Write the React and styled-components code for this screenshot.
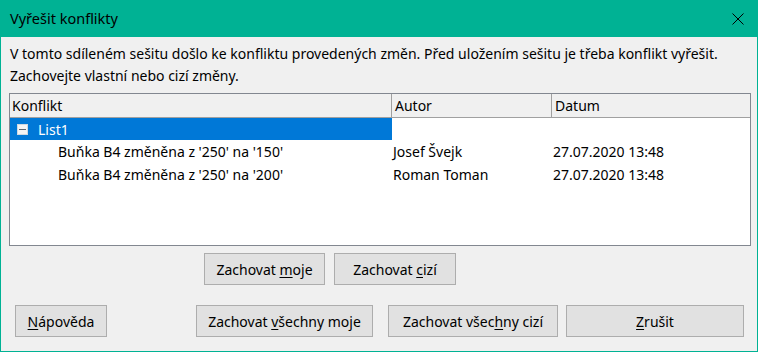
import React from 'react';
import styled, { createGlobalStyle } from 'styled-components';

const GlobalStyle = createGlobalStyle`
  html, body {
    margin: 0;
    padding: 0;
    background: #f0f0f0;
  }
  * {
    box-sizing: border-box;
  }
`;

const Window = styled.div`
  width: 758px;
  height: 352px;
  display: flex;
  flex-direction: column;
  background: #f0f0f0;
  border: 1px solid #00b294;
  border-top: none;
  font-family: 'Noto Sans', 'Open Sans', sans-serif;
  font-size: 14px;
  color: #000;
`;

const TitleBar = styled.div`
  height: 37px;
  margin: 0 -1px;
  background: #00b294;
  display: flex;
  align-items: center;
  justify-content: space-between;
  padding: 0 14px 2px 10px;
`;

const Title = styled.span`
  font-size: 14.5px;
  color: #000;
`;

const CloseButton = styled.span`
  display: flex;
  width: 12px;
  height: 12px;
  margin-top: 2px;
`;

const Body = styled.div`
  flex: 1;
  display: flex;
  flex-direction: column;
  padding: 6px 6px 0 8px;
`;

const Message = styled.div`
  padding-left: 1px;
  line-height: 22px;
  white-space: nowrap;
  margin-bottom: 6px;
`;

const Table = styled.div`
  height: 153px;
  border: 1px solid #828790;
  background: #fff;
  display: flex;
  flex-direction: column;
`;

const HeaderRow = styled.div`
  display: grid;
  grid-template-columns: 382px 160px 1fr;
  height: 24px;
  background: #f0f0f0;
  border-bottom: 1px solid #a0a0a0;
`;

const HeaderCell = styled.div`
  display: flex;
  align-items: center;
  padding-left: ${p => p.$pad ?? 2}px;
  border-right: ${p => (p.$last ? 'none' : '1px solid #a0a0a0')};
`;

const Row = styled.div`
  display: grid;
  grid-template-columns: 382px 160px 1fr;
  height: ${p => p.$h ?? 23}px;
`;

const Cell = styled.div`
  display: flex;
  align-items: center;
  padding-left: ${p => p.$indent ?? 1}px;
  background: ${p => (p.$selected ? '#0078d7' : 'transparent')};
  color: ${p => (p.$selected ? '#fff' : '#000')};
  white-space: nowrap;
`;

const Expander = styled.span`
  display: flex;
  margin-right: 10px;
`;

const ButtonRow = styled.div`
  display: flex;
  gap: ${p => p.$gap ?? 9}px;
  padding-left: ${p => p.$left ?? 0}px;
  margin-top: ${p => p.$top ?? 0}px;
`;

const Button = styled.button`
  flex: none;
  width: ${p => p.$w}px;
  height: 32px;
  margin: 0 0 0 ${p => p.$ml ?? 0}px;
  background: #e1e1e1;
  border: 1px solid #adadad;
  border-radius: 0;
  font-family: 'Noto Sans', 'Open Sans', sans-serif;
  font-size: 14px;
  color: #000;
  padding: 0;
  display: flex;
  align-items: center;
  justify-content: center;

  u {
    text-underline-offset: 2px;
  }
`;

const MinusBox = () => (
  <svg width="11" height="11" viewBox="0 0 11 11">
    <rect x="0.5" y="0.5" width="10" height="10" fill="#f4f4f4" stroke="#cfd8e0" />
    <line x1="2" y1="5.5" x2="9" y2="5.5" stroke="#5a6470" strokeWidth="1" />
  </svg>
);

const CloseIcon = () => (
  <svg width="12" height="12" viewBox="0 0 12 12">
    <path d="M0.5 0.5 L11.5 11.5 M11.5 0.5 L0.5 11.5" stroke="#000" strokeWidth="1" />
  </svg>
);

const changes = [
  { text: "Buňka B4 změněna z '250' na '150'", author: 'Josef Švejk', date: '27.07.2020 13:48' },
  { text: "Buňka B4 změněna z '250' na '200'", author: 'Roman Toman', date: '27.07.2020 13:48' },
];

export default function App() {
  return (
    <>
      <GlobalStyle />
      <Window>
        <TitleBar>
          <Title>Vyřešit konflikty</Title>
          <CloseButton><CloseIcon /></CloseButton>
        </TitleBar>
        <Body>
          <Message>
            V tomto sdíleném sešitu došlo ke konfliktu provedených změn. Před uložením sešitu je třeba konflikt vyřešit.
            <br />
            Zachovejte vlastní nebo cizí změny.
          </Message>

          <Table>
            <HeaderRow>
              <HeaderCell>Konflikt</HeaderCell>
              <HeaderCell $pad={3}>Autor</HeaderCell>
              <HeaderCell $pad={3} $last>Datum</HeaderCell>
            </HeaderRow>
            <Row $h={22}>
              <Cell $selected $indent={7}>
                <Expander><MinusBox /></Expander>
                List1
              </Cell>
              <Cell />
              <Cell />
            </Row>
            {changes.map(c => (
              <Row key={c.author}>
                <Cell $indent={48}>{c.text}</Cell>
                <Cell>{c.author}</Cell>
                <Cell>{c.date}</Cell>
              </Row>
            ))}
          </Table>

          <ButtonRow $left={195} $top={7}>
            <Button $w={121}>Zachovat&nbsp;<u>m</u>oje</Button>
            <Button $w={122}>Zachovat&nbsp;<u>c</u>izí</Button>
          </ButtonRow>

          <ButtonRow $left={6} $top={20} $gap={0}>
            <Button $w={92}><u>N</u>ápověda</Button>
            <Button $w={177} $ml={89}>Zachovat&nbsp;<u>v</u>šechny moje</Button>
            <Button $w={170} $ml={15}>Zachovat všec<u>h</u>ny cizí</Button>
            <Button $w={178} $ml={8}><u>Z</u>rušit</Button>
          </ButtonRow>
        </Body>
      </Window>
    </>
  );
}
